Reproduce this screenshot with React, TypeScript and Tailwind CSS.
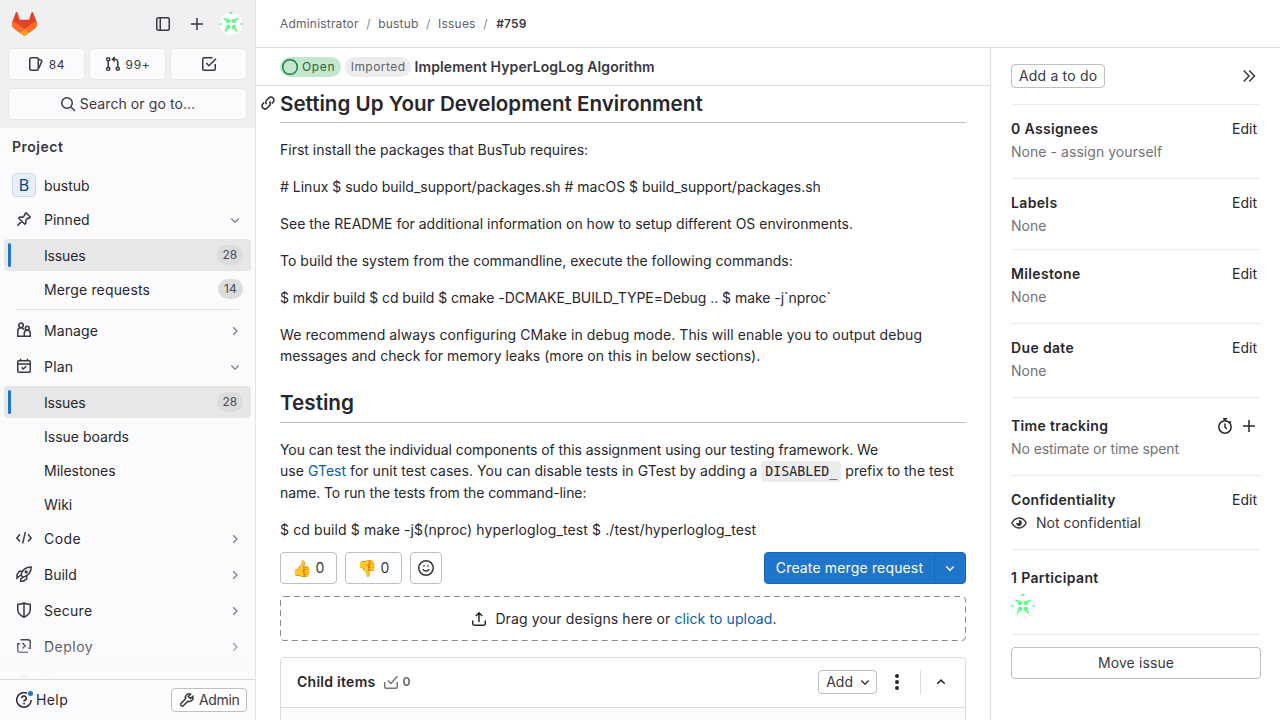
import type { ReactNode } from 'react';

const Icon = ({ children, size = 16, className = '' }: { children: ReactNode; size?: number; className?: string }) => (
  <svg width={size} height={size} viewBox="0 0 16 16" fill="none" stroke="currentColor" strokeWidth="1.5" className={`shrink-0 ${className}`}>
    {children}
  </svg>
);

const icons = {
  sidebar: <><rect x="1.75" y="1.75" width="12.5" height="12.5" rx="1.5" /><path d="M5.25 2v12" /></>,
  plus: <path d="M8 2v12M2 8h12" />,
  issues: <><rect x="1.75" y="1.75" width="8.5" height="12.5" rx="1.5" /><path d="M10.5 3.2l2.6.9c.6.2.8.8.6 1.3L11.4 11l-1 1.6" /></>,
  merge: <><circle cx="3.250" cy="3.250" r="1.600" /><circle cx="3.250" cy="12.750" r="1.600" /><circle cx="12.750" cy="12.750" r="1.600" /><path d="M3.250 5v6M12.750 11V6a2.750 2.750 0 0 0-2.750-2.750H7.700M9.700 1L7.500 3.250l2.200 2.200" /></>,
  todo: <><path d="M14.25 8v5c0 .7-.5 1.25-1.25 1.25H3c-.7 0-1.25-.5-1.25-1.25V3c0-.7.5-1.25 1.25-1.25h8.5" /><path d="M5.3 7l2.6 2.7L15 2.7" /></>,
  search: <><circle cx="7" cy="7" r="5.25" /><path d="M11 11l4 4" /></>,
  pin: <path d="M10 1.800l4.200 4.200-1.200 1.200-1-.1-2.200 2.200.1 2.900-1.100 1.100-6.100-6.100 1.100-1.100 2.900.1 2.200-2.200-.1-1zM5.600 10.400L1.300 14.700" strokeLinejoin="round" />,
  manage: <><circle cx="5" cy="3.3" r="2.3" /><path d="M7.8 14.200H1.750V8.800a3.250 3.250 0 0 1 6.300-1M8.250 14.200V11.200a3 3 0 0 1 6 0v3z" /><circle cx="11.300" cy="6.200" r="1.900" /></>,
  plan: <><rect x="1.75" y="2.75" width="12.5" height="11.5" rx="1" /><path d="M4.5.7V3M11.5.7V3M2 5.9h12M5.6 9.4l1.7 1.6 3-3" /></>,
  code: <path d="M4 4.3L.9 8 4 11.4M12 4.3L15.1 8 12 11.4M9.3 2.2L6.7 13.4" />,
  build: <><path d="M4.900 9C6 4.500 9.500 1 15.200.9 15.100 6.500 11.500 10 7.200 11.200zM6 5.300H3.300L1 8.700V12.200l3.900-3.200M10.700 10v2.900L7.400 15.200H4.700L4.900 13l2.300-1.800" /><circle cx="10.200" cy="5.900" r="0.900" /></>,
  secure: <path d="M8 1c1.8 1 3.8 1.4 6.25 1.5V8c0 3.5-2.7 5.5-6.25 7.2C4.4 13.5 1.75 11.500 1.75 8V2.500C4.2 2.400 6.200 2 8 1zM8 1.500V15" />,
  deploy: <path d="M4.500 1.750h7.500A2.250 2.250 0 0 1 14.250 4v6.300h-2M3.800 5.700H1.750V12A2.250 2.250 0 0 0 4 14.250h8M6.500 5l2.700 2.800-2.700 2.700" />,
  operate: <path d="M4 14V6.500a4 4 0 0 1 8 0V14" />,
  help: <><path d="M11 1.300A7.250 7.250 0 1 0 15.200 8" /><path d="M5.800 6.200A2.200 2.200 0 1 1 8.800 8.200C8.200 8.500 8 8.800 8 9.600" /><path d="M8 10.800v1.600" /></>,
  wrench: <path d="M13.900 4.300L11.500 6.500 9.400 4.500 11.600 2.100C8.300 1 5.600 3.900 6.600 6.700L2.100 11.200c-.8.800-.5 1.700 0 2.300.7.700 1.700.700 2.400 0L9 9.200c3.200 1 5.900-1.800 4.900-4.900z" />,
  link: <><path d="M6.600 9.300a3 3 0 0 1 .2-4.300l2-2a3 3 0 0 1 4.300 4.200l-1.300 1.300" /><path d="M9.400 6.600a3 3 0 0 1-.2 4.400l-2 2a3 3 0 0 1-4.300-4.200l1.300-1.300" /></>,
  smile: <><circle cx="8" cy="8" r="7.250" /><path d="M5.200 9c.4 2.800 5.200 2.800 5.600 0" /><path d="M6 5.200v1.600M10 5.200v1.600" /></>,
  upload: <path d="M1.750 9.500v3.250c0 .8.600 1.400 1.400 1.400h9.700c.8 0 1.400-.6 1.400-1.400V9.500M8 11V1.800M4.800 5L8 1.800 11.200 5" />,
  task: <path d="M1.750 8v4.750c0 .8.700 1.500 1.500 1.500h9.500c.8 0 1.500-.7 1.500-1.500V8M4.800 6.500l3 3L14.500 2.300" />,
  timer: <><circle cx="8" cy="9" r="6.200" /><path d="M8 5.500V9l1.800 2M6 .8h4M8 .8V3M12.600 3.200l1.200 1.200" /></>,
  eye: <><path d="M.9 8C2.500 4.800 5 3.100 8 3.100S13.500 4.800 15.100 8C13.500 11.200 11 12.900 8 12.900S2.500 11.200.9 8z" /><path d="M8 5.100A2.900 2.900 0 1 1 5.100 8h2.300c.3 0 .6-.3.600-.6z" fill="currentColor" stroke="none" /></>,
  collapse: <path d="M2.700 2.500L8 8l-5.300 5.500M8.200 2.500L13.500 8l-5.300 5.500" />,
  down: <path d="M4.300 6.500L8 10.200l3.700-3.700" />,
  up: <path d="M4.300 9.800L8 6.100l3.700 3.700" />,
  right: <path d="M6.200 4.300L9.900 8l-3.700 3.700" />,
};

const Avatar = () => (
  <svg width="24" height="24" viewBox="0 0 24 24" className="shrink-0 rounded-full bg-white">
    <g fill="#68f68d">
      <circle cx="9" cy="9" r="2.300" /><circle cx="15" cy="9" r="2.300" /><circle cx="9" cy="15" r="2.300" /><circle cx="15" cy="15" r="2.300" />
      <path d="M9.500 0h5L12 2.600zM0 12l2.400-1.500v3zM24 12l-2.400-1.500v3zM3.500 6h3.800v3zM20.500 6h-3.800v3zM6 17v4l3-4zM18 17v4l-3-4z" />
      <path d="M10.500 8.500h3v1h-3zM10.500 14.500h3v1h-3z" opacity="0.500" />
    </g>
    <circle cx="12" cy="12" r="11.500" fill="none" stroke="#28272d" strokeOpacity="0.08" />
  </svg>
);

const Count = ({ n }: { n: string }) => (
  <span className="rounded-full bg-[#dcdcde] px-1.5 text-xs leading-5 text-[#4c4b51]">{n}</span>
);

const Section = ({ icon, label, open = false, className = 'h-9' }: { icon: ReactNode; label: string; open?: boolean; className?: string }) => (
  <div className={`flex shrink-0 items-center pl-4 pr-3 ${className}`}>
    <Icon className="-mt-0.5 mr-3 text-[#3a383f]">{icon}</Icon>
    <span className="flex-1">{label}</span>
    <Icon size={16} className="text-[#89888d]">{open ? icons.down : icons.right}</Icon>
  </div>
);

const Sub = ({ label, n, active = false, className = '' }: { label: string; n?: string; active?: boolean; className?: string }) => (
  <div className={`mx-1 mb-0.5 flex h-8 shrink-0 items-center rounded pr-2 ${active ? 'bg-[#e7e7e9]' : ''} ${className}`}>
    <span className={`ml-1 h-6 w-[3px] rounded-full ${active ? 'bg-[#1f75cb]' : ''}`} />
    <span className="ml-[33px] flex-1 pt-0.5">{label}</span>
    {n && <Count n={n} />}
  </div>
);

const ShortcutBtn = ({ icon, label }: { icon: ReactNode; label?: string }) => (
  <div className="flex h-8 flex-1 items-center justify-center gap-[5px] rounded border border-[#e7e7ea] bg-[#fbfbfd] pt-px text-xs tracking-[0.7px]">
    <Icon className="-mt-px">{icon}</Icon>
    {label}
  </div>
);

const Sidebar = () => (
  <aside className="flex h-full w-64 shrink-0 flex-col border-r border-[#e4e4e7] bg-[#fbfbfd]">
    <div className="h-32 shrink-0 bg-[#f0f0f2] px-2 text-[#3a383f]">
      <div className="flex h-12 items-center pl-1 pr-1">
        <svg width="25" height="24" viewBox="0 0 25 24">
          <path d="m24.507 9.5-.034-.09L21.082.562a.896.896 0 0 0-1.694.091l-2.29 7.01H7.825L5.535.653a.898.898 0 0 0-1.694-.09L.451 9.411.416 9.5a6.297 6.297 0 0 0 2.09 7.278l.012.01.03.022 5.16 3.867 2.56 1.935 1.554 1.176a1.051 1.051 0 0 0 1.268 0l1.555-1.176 2.56-1.935 5.197-3.89.014-.01A6.297 6.297 0 0 0 24.507 9.5Z" fill="#E24329" />
          <path d="m24.507 9.5-.034-.09a11.44 11.44 0 0 0-4.56 2.051l-7.447 5.632 4.742 3.584 5.197-3.89.014-.01A6.297 6.297 0 0 0 24.507 9.5Z" fill="#FC6D26" />
          <path d="m7.707 20.677 2.56 1.935 1.555 1.176a1.051 1.051 0 0 0 1.268 0l1.555-1.176 2.56-1.935-4.743-3.584-4.755 3.584Z" fill="#FCA326" />
          <path d="M5.01 11.461a11.43 11.43 0 0 0-4.56-2.05L.416 9.5a6.297 6.297 0 0 0 2.09 7.278l.012.01.03.022 5.16 3.867 4.745-3.584-7.444-5.632Z" fill="#FC6D26" />
        </svg>
        <Icon className="ml-auto">{icons.sidebar}</Icon>
        <Icon className="ml-[18px] mr-[14px]">{icons.plus}</Icon>
        <Avatar />
      </div>
      <div className="flex gap-1">
        <ShortcutBtn icon={icons.issues} label="84" />
        <ShortcutBtn icon={icons.merge} label="99+" />
        <ShortcutBtn icon={icons.todo} />
      </div>
      <div className="mt-2 flex h-8 items-center justify-center gap-1 rounded border border-[#e7e7ea] bg-[#fbfbfd] tracking-[0.09px]">
        <Icon>{icons.search}</Icon>
        Search or go to…
      </div>
    </div>
    <div className="relative flex min-h-0 flex-1 flex-col overflow-hidden">
      <div className="flex h-[38px] shrink-0 items-center pl-3 font-semibold tracking-[0.5px] text-[#3a383f]">Project</div>
      <div className="flex h-10 shrink-0 items-center pl-3">
        <span className="mr-2 -mt-0.5 flex size-6 items-center justify-center rounded border border-[#cfdbec] bg-[#e6effa] text-base text-[#064787]">B</span>
        bustub
      </div>
      <Section icon={icons.pin} label="Pinned" open className="mb-[5px] h-7" />
      <Sub label="Issues" n="28" active className="tracking-[-0.15px]" />
      <Sub label="Merge requests" n="14" className="tracking-[0.15px]" />
      <div className="mx-4 mt-[2px] h-px shrink-0 bg-[#e4e4e7]" />
      <div className="h-[3px] shrink-0" />
      <Section icon={icons.manage} label="Manage" className="h-9 tracking-[0.1px]" />
      <Section icon={icons.plan} label="Plan" open className="h-9 tracking-[0.2px]" />
      <div className="h-px shrink-0" />
      <Sub label="Issues" n="28" active className="tracking-[-0.15px]" />
      <Sub label="Issue boards" />
      <Sub label="Milestones" />
      <Sub label="Wiki" />
      <Section icon={icons.code} label="Code" className="-mt-px h-9 tracking-[0.4px]" />
      <Section icon={icons.build} label="Build" />
      <Section icon={icons.secure} label="Secure" className="h-9 tracking-[0.3px]" />
      <Section icon={icons.deploy} label="Deploy" className="h-9 tracking-[0.5px]" />
      <Section icon={icons.operate} label="Operate" />
      <div className="absolute inset-x-0 bottom-0 h-[42px] bg-gradient-to-t from-[#fbfbfd] to-[#fbfbfd]/0" />
    </div>
    <div className="flex h-[41px] shrink-0 items-center justify-between border-t border-[#dcdcde] pl-4 pr-2">
      <span className="relative flex items-center gap-1 tracking-[0.4px]">
        <Icon>{icons.help}</Icon>
        <span className="absolute left-3 top-[1px] size-[5px] rounded-full bg-[#1f75cb]" />
        Help
      </span>
      <span className="flex h-6 w-[76px] items-center gap-1 rounded border border-[#bfbfc3] bg-white px-[7px] tracking-[-0.35px] text-[#3a383f]">
        <Icon>{icons.wrench}</Icon>
        Admin
      </span>
    </div>
  </aside>
);

const Field = ({ title, value, h, action }: { title: string; value: ReactNode; h: string; action?: ReactNode }) => (
  <div className={`shrink-0 border-t border-[#ececef] ${h}`}>
    <div className="flex h-[23px] items-center justify-between pr-1">
      <span className="font-semibold tracking-[0.35px]">{title}</span>
      {action ?? <span>Edit</span>}
    </div>
    <div className="flex h-[23px] items-center text-[#737278]">{value}</div>
  </div>
);

const Details = () => (
  <aside className="flex w-[290px] shrink-0 flex-col border-l border-[#dcdcde] pl-5 pr-[19px]">
    <div className="flex h-14 shrink-0 items-center justify-between pr-1">
      <span className="flex h-6 items-center rounded border border-[#bfbfc3] px-[7px] tracking-[0.18px] text-[#3a383f]">Add a to do</span>
      <Icon className="text-[#3a383f]">{icons.collapse}</Icon>
    </div>
    <Field h="h-[74px] pt-3" title="0 Assignees" value={<span className="tracking-[0.05px]">None - assign yourself</span>} />
    <Field h="h-[71px] pt-3" title="Labels" value="None" />
    <Field h="h-[74px] pt-3" title="Milestone" value="None" />
    <Field h="h-[74px] pt-3" title="Due date" value="None" />
    <Field
      h="h-[78px] pt-4"
      title="Time tracking"
      value={<span className="tracking-[-0.08px]">No estimate or time spent</span>}
      action={<span className="flex gap-2"><Icon>{icons.timer}</Icon><Icon>{icons.plus}</Icon></span>}
    />
    <Field
      h="h-[74px] pt-3"
      title="Confidentiality"
      value={<span className="flex items-center gap-[9px] text-[#3a383f]"><Icon>{icons.eye}</Icon>Not confidential</span>}
    />
    <div className="h-[85px] shrink-0 border-t border-[#ececef] pt-4">
      <div className="h-7 font-semibold leading-[23px] tracking-[0.35px]">1 Participant</div>
      <Avatar />
    </div>
    <div className="border-t border-[#ececef] pt-3">
      <div className="flex h-8 items-center justify-center rounded border border-[#bfbfc3] tracking-[0.1px] text-[#3a383f]">Move issue</div>
    </div>
  </aside>
);

const Reaction = ({ emoji }: { emoji: string }) => (
  <span className="flex h-8 w-[57px] items-center justify-center gap-1 rounded border border-[#bfbfc3] text-[#3a383f]">
    <span className="-ml-px text-base leading-none">{emoji}</span>0
  </span>
);

const Issue = () => (
  <main className="flex min-w-0 flex-1 flex-col overflow-hidden">
    <div className="flex h-[38px] shrink-0 items-center border-b border-[#dcdcde] pl-6">
      <span className="mr-1 flex h-5 items-center gap-[3px] rounded-full bg-[#c3e6cd] pl-[1px] pr-[5.500px] text-xs tracking-[0.65px] text-[#24663b]">
        <svg width="18" height="18" viewBox="0 0 18 18"><circle cx="9" cy="9" r="7.300" fill="none" stroke="#108548" strokeWidth="1.500" /></svg>
        Open
      </span>
      <span className="mr-[3px] flex h-5 items-center rounded-full bg-[#ececef] px-1.5 text-xs tracking-[0.45px] text-[#626168]">Imported</span>
      <span className="font-semibold tracking-[0.1px] text-[#3a383f]">Implement HyperLogLog Algorithm</span>
    </div>
    <div className="px-6">
      <div className="-ml-5 flex h-[37px] items-center border-[#bfbfc3]">
        <Icon size={16} className="-mt-1 mr-1">{icons.link}</Icon>
        <h2 className="flex h-full flex-1 items-center border-b border-[#bfbfc3] text-[20.600px] font-semibold">Setting Up Your Development Environment</h2>
      </div>
      <div className="mt-4 flex flex-col gap-4 leading-[21px]">
        <p>First install the packages that BusTub requires:</p>
        <p># Linux $ sudo build_support/packages.sh # macOS $ build_support/packages.sh</p>
        <p>See the README for additional information on how to setup different OS environments.</p>
        <p className="tracking-[0.02px]">To build the system from the commandline, execute the following commands:</p>
        <p className="tracking-[-0.05px]">$ mkdir build $ cd build $ cmake -DCMAKE_BUILD_TYPE=Debug .. $ make -j`nproc`</p>
        <p>
          <span className="tracking-[0.085px]">We recommend always configuring CMake in debug mode. This will enable you to output debug</span><br />
          <span className="tracking-[0.03px]">messages and check for memory leaks (more on this in below sections).</span>
        </p>
      </div>
      <h2 className="mt-[17px] flex h-10 items-center border-b border-[#bfbfc3] text-[20.700px] font-semibold">Testing</h2>
      <p className="mt-4 leading-[21px]">
        <span className="tracking-[-0.065px]">You can test the individual components of this assignment using our testing framework. We</span><br />
        <span className="tracking-[0.03px]">use <span className="text-[#0b5cad]">GTest</span> for unit test cases. You can disable tests in GTest by adding a </span>
        <code className="rounded bg-[#ececef] px-1 py-[3px] font-['DejaVu_Sans_Mono',monospace] text-[13.300px]">DISABLED_</code> prefix to the test<br />
        <span className="tracking-[-0.09px]">name. To run the tests from the command-line:</span>
      </p>
      <p className="mt-4 leading-[21px] tracking-[0.11px]">$ cd build $ make -j$(nproc) hyperloglog_test $ ./test/hyperloglog_test</p>
      <div className="mt-3 flex gap-2">
        <Reaction emoji="👍" />
        <Reaction emoji="👎" />
        <span className="flex size-8 items-center justify-center rounded border border-[#bfbfc3] text-[#3a383f]"><Icon>{icons.smile}</Icon></span>
        <span className="ml-auto flex h-8 items-center rounded border border-[#1068bf] bg-[#1f75cb] text-white">
          <span className="w-[169px] text-center tracking-[0.15px]">Create merge request</span>
          <span className="flex h-full w-[31px] items-center justify-center border-l border-[#1068bf]"><Icon>{icons.down}</Icon></span>
        </span>
      </div>
      <div className="relative mt-3 flex h-[45px] items-center justify-center">
        <svg className="absolute inset-0 text-[#89888d]" width="686" height="45"><rect x="0.500" y="0.500" width="685" height="44" rx="3.500" fill="none" stroke="currentColor" strokeDasharray="6 4" /></svg>
        <Icon className="ml-0.5 mr-2">{icons.upload}</Icon>
        <span className="tracking-[0.11px]">Drag your designs here or <span className="text-[#0b5cad]">click to upload</span>.</span>
      </div>
      <div className="mt-4 h-24 rounded border border-[#dcdcde] bg-[#fbfafd]">
        <div className="flex h-[50px] items-center rounded-t border-b border-[#dcdcde] bg-white pb-px pl-4 pr-4">
          <span className="font-semibold tracking-[0.27px]">Child items</span>
          <Icon className="ml-[7px] mr-1 text-[#737278]">{icons.task}</Icon>
          <span className="text-xs font-semibold text-[#626168]">0</span>
          <span className="ml-auto flex h-6 items-center gap-1 rounded border border-[#bfbfc3] pl-[7px] pr-[3px] text-[#3a383f]">Add<Icon>{icons.down}</Icon></span>
          <svg width="16" height="16" viewBox="0 0 16 16" className="ml-3 mr-[15px]" fill="#28272d"><circle cx="8" cy="2" r="2" /><circle cx="8" cy="8" r="2" /><circle cx="8" cy="14" r="2" /></svg>
          <span className="mr-3 h-6 w-px bg-[#dcdcde]" />
          <Icon>{icons.up}</Icon>
        </div>
      </div>
    </div>
  </main>
);

const Separator = () => <span className="mx-[7.500px] text-[#89888d]">/</span>;

export default function App() {
  return (
    <div className="flex h-[720px] w-[1280px] overflow-hidden bg-white font-['Inter',sans-serif] text-sm text-[#28272d]">
      <Sidebar />
      <div className="flex min-w-0 flex-1 flex-col">
        <header className="flex h-12 shrink-0 items-center border-b border-[#dcdcde] pl-6 text-xs tracking-[0.2px] text-[#626168]">
          Administrator<Separator />
          bustub<Separator />
          Issues<Separator />
          <span className="ml-px font-semibold text-[#3a383f]">#759</span>
        </header>
        <div className="flex min-h-0 flex-1">
          <Issue />
          <Details />
        </div>
      </div>
    </div>
  );
}
